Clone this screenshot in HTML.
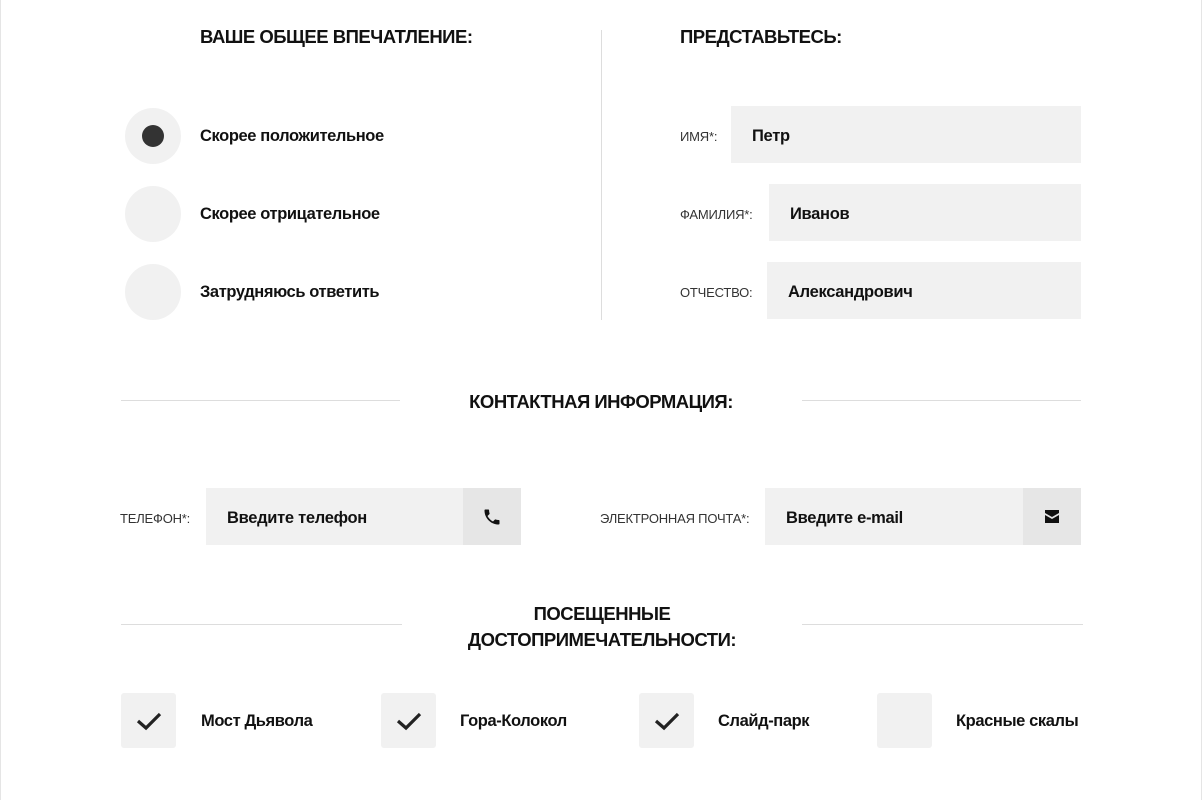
<!DOCTYPE html>
<html><head><meta charset="utf-8"><style>
*{margin:0;padding:0;box-sizing:border-box}
body{width:1202px;height:800px;background:#fff;position:relative;overflow:hidden;font-family:"Liberation Sans","DejaVu Sans",sans-serif;color:#111}
.a{position:absolute}
.h{font-weight:bold;font-size:18.5px;color:#111;letter-spacing:-0.5px}
.t{font-weight:bold;font-size:16.5px;letter-spacing:-0.4px}
.r{width:56px;height:56px;border-radius:50%;background:#f1f1f1}
.lab{font-size:13px;color:#333;text-transform:uppercase;letter-spacing:-0.2px}
.in{background:#f1f1f1;height:57px;font-weight:bold;font-size:16.5px;padding-left:21px;line-height:61px;letter-spacing:-0.3px}
.btn{background:#e6e6e6;width:58px;height:57px;display:flex;align-items:center;justify-content:center}
.line{height:1px;background:#ddd}
.cb{width:55px;height:55px;background:#f1f1f1;border-radius:3px;display:flex;align-items:center;justify-content:center}
</style></head><body>
<div class="a" style="left:0;top:0;width:1px;height:800px;background:#e5e5e5"></div>
<div class="a" style="right:0;top:0;width:1px;height:800px;background:#e5e5e5"></div>

<div class="a h" style="left:200px;top:26px">ВАШЕ ОБЩЕЕ ВПЕЧАТЛЕНИЕ:</div>
<div class="a r" style="left:125px;top:108px"></div>
<div class="a" style="left:142px;top:125px;width:22px;height:22px;border-radius:50%;background:#333"></div>
<div class="a t" style="left:200px;top:127px">Скорее положительное</div>
<div class="a r" style="left:125px;top:186px"></div>
<div class="a t" style="left:200px;top:205px">Скорее отрицательное</div>
<div class="a r" style="left:125px;top:264px"></div>
<div class="a t" style="left:200px;top:283px">Затрудняюсь ответить</div>

<div class="a" style="left:601px;top:30px;width:1px;height:290px;background:#ddd"></div>

<div class="a h" style="left:680px;top:26px">ПРЕДСТАВЬТЕСЬ:</div>
<div class="a lab" style="left:680px;top:129px">Имя*:</div>
<div class="a in" style="left:731px;top:106px;width:350px">Петр</div>
<div class="a lab" style="left:680px;top:207px">Фамилия*:</div>
<div class="a in" style="left:769px;top:184px;width:312px">Иванов</div>
<div class="a lab" style="left:680px;top:285px">Отчество:</div>
<div class="a in" style="left:767px;top:262px;width:314px">Александрович</div>

<div class="a line" style="left:121px;top:400px;width:279px"></div>
<div class="a line" style="left:802px;top:400px;width:279px"></div>
<div class="a h" style="left:400px;width:402px;text-align:center;top:391px">КОНТАКТНАЯ ИНФОРМАЦИЯ:</div>

<div class="a lab" style="left:120px;top:511px">Телефон*:</div>
<div class="a in" style="left:206px;top:488px;width:257px">Введите телефон</div>
<div class="a btn" style="left:463px;top:488px"><svg width="20" height="20" viewBox="0 0 24 24"><path d="M6.6 10.8c1.4 2.8 3.8 5.1 6.6 6.6l2.2-2.2c.3-.3.7-.4 1-.2 1.1.4 2.3.6 3.6.6.6 0 1 .4 1 1V20c0 .6-.4 1-1 1C10.6 21 3 13.4 3 4c0-.6.4-1 1-1h3.5c.6 0 1 .4 1 1 0 1.3.2 2.5.6 3.6.1.3 0 .7-.2 1z" fill="#111"/></svg></div>
<div class="a lab" style="left:600px;top:511px">Электронная почта*:</div>
<div class="a in" style="left:765px;top:488px;width:258px">Введите e-mail</div>
<div class="a btn" style="left:1023px;top:488px"><svg width="14" height="13" viewBox="0 0 14 13"><path d="M0 0h14v3L7 7 0 3z M0 5l7 4 7-4v8H0z" fill="#111"/></svg></div>

<div class="a line" style="left:121px;top:624px;width:281px"></div>
<div class="a line" style="left:802px;top:624px;width:281px"></div>
<div class="a h" style="left:402px;width:400px;text-align:center;top:601px;line-height:26px">ПОСЕЩЕННЫЕ<br>ДОСТОПРИМЕЧАТЕЛЬНОСТИ:</div>

<div class="a cb" style="left:121px;top:693px"><svg width="26" height="20" viewBox="0 0 26 20"><path d="M2 10l8 7L24 3" stroke="#222" stroke-width="3.2" fill="none"/></svg></div>
<div class="a t" style="left:201px;top:712px">Мост Дьявола</div>
<div class="a cb" style="left:381px;top:693px"><svg width="26" height="20" viewBox="0 0 26 20"><path d="M2 10l8 7L24 3" stroke="#222" stroke-width="3.2" fill="none"/></svg></div>
<div class="a t" style="left:460px;top:712px">Гора-Колокол</div>
<div class="a cb" style="left:639px;top:693px"><svg width="26" height="20" viewBox="0 0 26 20"><path d="M2 10l8 7L24 3" stroke="#222" stroke-width="3.2" fill="none"/></svg></div>
<div class="a t" style="left:718px;top:712px">Слайд-парк</div>
<div class="a cb" style="left:877px;top:693px"></div>
<div class="a t" style="left:956px;top:712px">Красные скалы</div>
</body></html>
